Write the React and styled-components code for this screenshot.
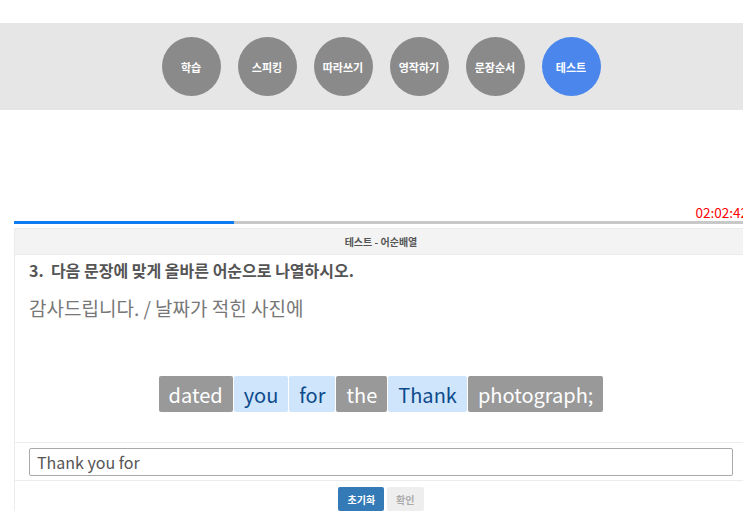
import React from "react";
import styled, { createGlobalStyle } from "styled-components";

const Global = createGlobalStyle`
  html, body { margin: 0; padding: 0; background: #fff; overflow: hidden; }
  body { font-family: "Noto Sans CJK KR", "Noto Sans", sans-serif; }
  * { box-sizing: border-box; }
`;

const Page = styled.div`
  width: 762px;
  padding-top: 23px;
`;

const NavBar = styled.nav`
  height: 87px;
  background: #e6e6e6;
  display: flex;
  justify-content: center;
  align-items: center;
  gap: 17px;
`;

const Circle = styled.div`
  width: 59px;
  height: 59px;
  border-radius: 50%;
  background: ${(p) => (p.$active ? "#4a86ec" : "#8a8a8a")};
  color: #fff;
  display: flex;
  align-items: center;
  justify-content: center;
  font-size: 11px;
  font-weight: 700;
`;

const TimerRow = styled.div`
  margin-top: 94px;
  padding: 0 14px;
  display: flex;
  justify-content: flex-end;
  color: #ff0000;
  font-size: 13.5px;
  line-height: 17px;
  height: 17px;
`;

const Progress = styled.div`
  margin: 0 14px;
  height: 3px;
  background: #c8c8c8;
  display: flex;
`;

const ProgressFill = styled.div`
  height: 100%;
  background: #0f7bf2;
`;

const Card = styled.section`
  margin: 4px 14px 0;
  border: 1px solid #ececec;
  border-bottom: none;
`;

const CardHeader = styled.div`
  height: 26px;
  background: #f3f3f3;
  border-bottom: 1px solid #ececec;
  display: flex;
  align-items: center;
  justify-content: center;
  font-size: 10px;
  font-weight: 700;
  color: #555;
`;

const Body = styled.div`
  padding: 4px 14px 0;
  height: 187px;
  display: flex;
  flex-direction: column;
`;

const Question = styled.div`
  font-size: 16px;
  font-weight: 700;
  color: #555;
  line-height: 23px;
`;

const Sentence = styled.div`
  margin-top: 13px;
  font-size: 19px;
  color: #777;
  line-height: 26px;
`;

const Tiles = styled.div`
  margin-top: 55px;
  display: flex;
  justify-content: center;
  gap: 1px;
`;

const Tile = styled.div`
  height: 36px;
  padding: 0 10px;
  display: flex;
  align-items: center;
  font-size: 20px;
  border-radius: 2px;
  background: ${(p) => (p.$picked ? "#cfe5fc" : "#999999")};
  color: ${(p) => (p.$picked ? "#0c4a8c" : "#ffffff")};
`;

const InputRow = styled.div`
  border-top: 1px solid #ececec;
  border-bottom: 1px solid #ececec;
  padding: 5px 14px 4px;
`;

const Answer = styled.div`
  height: 28px;
  border: 1px solid #aaa;
  border-radius: 2px;
  padding: 0 7px;
  display: flex;
  align-items: center;
  font-size: 16px;
  color: #555;
`;

const ButtonRow = styled.div`
  display: flex;
  justify-content: center;
  gap: 3px;
  padding-top: 6px;
`;

const Button = styled.button`
  height: 24px;
  padding: 0 9px;
  border: none;
  border-radius: 2px;
  font-family: inherit;
  font-size: 10px;
  font-weight: 700;
  background: ${(p) => (p.$primary ? "#337ab7" : "#eeeeee")};
  color: ${(p) => (p.$primary ? "#fff" : "#aaa")};
`;

const navItems = ["학습", "스피킹", "따라쓰기", "영작하기", "문장순서", "테스트"];
const tiles = [
  { w: "dated", p: false },
  { w: "you", p: true },
  { w: "for", p: true },
  { w: "the", p: false },
  { w: "Thank", p: true },
  { w: "photograph;", p: false },
];

export default function App() {
  return (
    <>
      <Global />
      <Page>
        <NavBar>
          {navItems.map((n, i) => (
            <Circle key={n} $active={i === navItems.length - 1}>
              {n}
            </Circle>
          ))}
        </NavBar>
        <TimerRow>02:02:42</TimerRow>
        <Progress>
          <ProgressFill style={{ width: "30%" }} />
        </Progress>
        <Card>
          <CardHeader>테스트 - 어순배열</CardHeader>
          <Body>
            <Question>3.&nbsp; 다음 문장에 맞게 올바른 어순으로 나열하시오.</Question>
            <Sentence>감사드립니다. / 날짜가 적힌 사진에</Sentence>
            <Tiles>
              {tiles.map((t) => (
                <Tile key={t.w} $picked={t.p}>
                  {t.w}
                </Tile>
              ))}
            </Tiles>
          </Body>
          <InputRow>
            <Answer>Thank you for</Answer>
          </InputRow>
          <ButtonRow>
            <Button $primary>초기화</Button>
            <Button>확인</Button>
          </ButtonRow>
        </Card>
      </Page>
    </>
  );
}
